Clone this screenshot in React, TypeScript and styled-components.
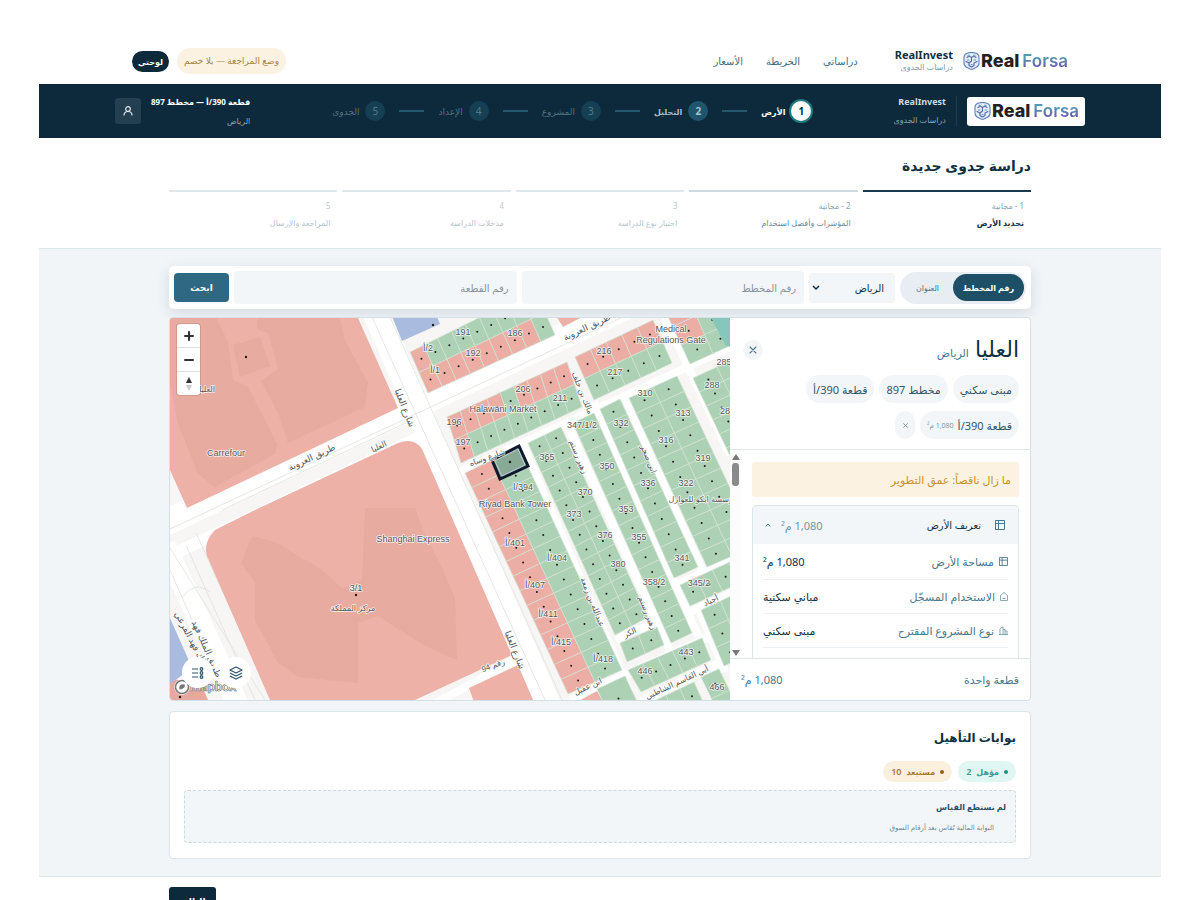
import React from "react";
import styled, { createGlobalStyle, css } from "styled-components";

const ink = "#123043";
const navy = "#0c2a3b";
const steel = "#4a788f";
const line = "#dce5ea";
const mist = "#f3f6f9";

const GlobalStyle = createGlobalStyle`
  * { box-sizing: border-box; }
  body {
    margin: 0;
    background: #fff;
    color: ${ink};
    font-family: "Noto Sans", "DejaVu Sans", sans-serif;
    font-size: 11px;
  }
  button, input, select { font-family: inherit; }
  h1, h2, p, ol, ul, dl, dd { margin: 0; padding: 0; }
  ol, ul { list-style: none; }
`;

const Page = styled.div`
  margin: 38px 39px 0;
`;

/* ---------- brand ---------- */

const LogoBox = styled.span<{ $boxed?: boolean }>`
  display: inline-flex;
  align-items: center;
  direction: ltr;
  gap: 1px;
  ${(p) =>
    p.$boxed &&
    css`
      background: #fff;
      border-radius: 3px;
      padding: 0 6px 0 7px;
      height: 29px;
    `}
`;

const Word = styled.span<{ $tint?: boolean }>`
  font-family: "Inter", sans-serif;
  font-weight: 800;
  font-size: 18px;
  line-height: 22px;
  color: #231f24;
  ${(p) =>
    p.$tint &&
    css`
      margin-left: 2px;
      font-size: 17px;
      font-weight: 600;
      background: linear-gradient(180deg, #4f9cb0 30%, #6a5fae 75%);
      -webkit-background-clip: text;
      background-clip: text;
      color: transparent;
    `}
`;

function Logo({ boxed }: { boxed?: boolean }) {
  return (
    <LogoBox $boxed={boxed}>
      <svg width="17" height="18" viewBox="0 0 17 18" fill="none" strokeWidth="1.1" strokeLinejoin="round" strokeLinecap="round">
        <path d="M4 1.200Q8.500-.200 13 1.200q3 1 3 4v6q0 3-2.500 4l-3.500 1.700q-1.500.700-3 0L3.500 15.200Q1 14 1 11V5.200q0-3 3-4z" stroke="#5d83b8" fill="#e4eaf6" />
        <path d="M4 5.500q2-2 4.500 0 2.500-2 4.500 0M8.500 5.500V9L6 11M3 9.500l3 1.500v2.500l2.500 1.500 2.500-1.500V11l3-1.500" stroke="#5669ad" />
        <path d="M5 3.300h1.500M10.500 3.300H12M11 8h1.500M4.500 8H6M8 12.500h1" stroke="#54a3b4" />
      </svg>
      <Word>Real</Word>
      <Word $tint>Forsa</Word>
    </LogoBox>
  );
}

/* ---------- top header ---------- */

const TopBar = styled.header`
  max-width: 936px;
  height: 46px;
  margin: 0 auto;
  display: flex;
  align-items: center;
  justify-content: space-between;
`;

const Cluster = styled.div<{ $gap: number }>`
  display: flex;
  align-items: center;
  gap: ${(p) => p.$gap}px;
`;

const BrandText = styled.div<{ $dark?: boolean }>`
  display: flex;
  flex-direction: column;
  gap: ${(p) => (p.$dark ? 6 : 0)}px;
  line-height: 12px;
  font-size: 8px;
  color: ${(p) => (p.$dark ? "#8fa5b2" : "#8599a5")};
  ${(p) =>
    p.$dark &&
    css`
      border-right: 1px solid #1d3d4e;
      padding-right: 10px;
    `}
  strong {
    font-size: ${(p) => (p.$dark ? 9 : 11)}px;
    color: ${(p) => (p.$dark ? "#cfdae1" : ink)};
  }
`;

const TopNav = styled.nav`
  display: flex;
  gap: 23px;
  a {
    color: #3f6c82;
    text-decoration: none;
    font-size: 10px;
  }
`;

const Notice = styled.span`
  background: #fbf2e2;
  color: #a88740;
  border-radius: 13px;
  padding: 0 7px;
  line-height: 26px;
  font-size: 9px;
`;

const DashButton = styled.button`
  border: 0;
  border-radius: 11px;
  background: ${navy};
  color: #fff;
  font-weight: 700;
  font-size: 8px;
  height: 21px;
  width: 37px;
  padding: 0;
`;

/* ---------- dark bar ---------- */

const DarkBar = styled.div`
  background: ${navy};
  height: 54px;
`;

const DarkInner = styled.div`
  max-width: 970px;
  height: 100%;
  margin: 0 auto;
  display: flex;
  align-items: center;
  justify-content: space-between;
`;

const Stages = styled.ol`
  display: flex;
  align-items: center;
  gap: 14px;
`;

const Stage = styled.li<{ $state: "on" | "next" | "off" }>`
  display: flex;
  align-items: center;
  gap: 6px;
  font-size: ${(p) => (p.$state === "off" ? 9 : 8)}px;
  font-weight: ${(p) => (p.$state === "off" ? 400 : 700)};
  color: ${(p) => ({ on: "#fff", next: "#a9bcc8", off: "#54717f" })[p.$state]};
  &:not(:last-child)::after {
    content: "";
    width: 25px;
    height: 2px;
    margin-right: 8px;
    background: #24586f;
  }
`;

const StageDot = styled.span<{ $state: "on" | "next" | "off" }>`
  width: 20px;
  height: 20px;
  border-radius: 50%;
  text-align: center;
  line-height: 20px;
  font-size: 10px;
  font-weight: ${(p) => (p.$state === "off" ? 400 : 700)};
  background: ${(p) => ({ on: "#fff", next: "#1f566d", off: "#153f53" })[p.$state]};
  color: ${(p) => ({ on: navy, next: "#a9c3d0", off: "#55798a" })[p.$state]};
  ${(p) => p.$state === "on" && "box-shadow: 0 0 0 2px #1d7c80;"}
`;

const ParcelInfo = styled.div`
  display: flex;
  flex-direction: column;
  gap: 6px;
  line-height: 13px;
  font-size: 8px;
  color: #93a8b4;
  strong { color: #fff; }
`;

const UserButton = styled.button`
  width: 26px;
  height: 26px;
  border: 0;
  border-radius: 3px;
  background: #243f4f;
  display: grid;
  place-items: center;
  padding: 0;
`;

/* ---------- heading and wizard ---------- */

const Container = styled.div`
  max-width: 862px;
  margin: 0 auto;
`;

const Heading = styled.section`
  height: 110px;
  padding-top: 16px;
  h1 {
    font-size: 14px;
    line-height: 24px;
    font-weight: 700;
  }
`;

const Wizard = styled.ol`
  display: grid;
  grid-template-columns: repeat(5, 1fr);
  gap: 5px;
  margin-top: 12px;
`;

const WizardStep = styled.li<{ $bar: string; $small: string; $text: string; $bold?: boolean }>`
  border-top: 2px solid ${(p) => p.$bar};
  padding: 8px 7px 0;
  display: flex;
  flex-direction: column;
  gap: 4px;
  color: ${(p) => p.$text};
  font-size: 8px;
  line-height: 14px;
  font-weight: ${(p) => (p.$bold ? 700 : 400)};
  small {
    font-size: 8px;
    line-height: 12px;
    font-weight: 400;
    color: ${(p) => p.$small};
  }
`;

/* ---------- search ---------- */

const Main = styled.main`
  background: #f1f5f8;
  border-top: 1px solid ${line};
  border-bottom: 1px solid ${line};
  padding: 17px 0;
`;

const SearchBar = styled.form`
  display: flex;
  align-items: center;
  gap: 5px;
  height: 43px;
  padding: 0 5px;
  background: #fff;
  border-radius: 5px;
  box-shadow: 0 4px 14px rgba(30, 60, 80, 0.14);
`;

const Segment = styled.div`
  display: flex;
  align-items: center;
  height: 32px;
  padding: 0 2px;
  border-radius: 16px;
  background: #e7edf3;
`;

const SegmentButton = styled.button<{ $on?: boolean }>`
  height: 27px;
  width: ${(p) => (p.$on ? 71 : 51)}px;
  padding: 0;
  border: 0;
  border-radius: 14px;
  font-size: 8px;
  font-weight: ${(p) => (p.$on ? 700 : 400)};
  background: ${(p) => (p.$on ? "#1d4f66" : "transparent")};
  color: ${(p) => (p.$on ? "#fff" : "#4d7388")};
`;

const SelectWrap = styled.label`
  position: relative;
  width: 86px;
  height: 30px;
  svg {
    position: absolute;
    left: 3px;
    top: 12px;
  }
`;

const CitySelect = styled.select`
  appearance: none;
  width: 100%;
  height: 100%;
  border: 0;
  border-radius: 3px;
  background: ${mist};
  color: ${ink};
  font-size: 10px;
  padding: 0 11px;
`;

const Field = styled.input`
  flex: 1;
  min-width: 0;
  height: 33px;
  border: 0;
  border-radius: 3px;
  background: ${mist};
  padding: 0 8px;
  font-size: 10px;
  &::placeholder { color: #8a949c; opacity: 1; }
`;

const SearchButton = styled.button`
  width: 55px;
  height: 29px;
  border: 0;
  border-radius: 4px;
  background: #2f6882;
  color: #fff;
  font-size: 9px;
  font-weight: 700;
`;

/* ---------- map card ---------- */

const MapCard = styled.section`
  display: flex;
  flex-direction: row-reverse;
  height: 384px;
  margin-top: 8px;
  border: 1px solid #d4e0e6;
  border-radius: 4px;
  overflow: hidden;
  background: #fff;
`;

const MapArea = styled.div`
  position: relative;
  flex: 1;
  min-width: 0;
  direction: ltr;
  > svg { display: block; width: 100%; height: 100%; }
`;

const ZoomStack = styled.div`
  position: absolute;
  left: 7px;
  top: 6px;
  width: 23px;
  border-radius: 3px;
  background: #fff;
  box-shadow: 0 0 0 1px rgba(0, 0, 0, 0.1);
`;

const ZoomButton = styled.button`
  display: grid;
  place-items: center;
  width: 100%;
  height: 23px;
  padding: 0;
  border: 0;
  background: transparent;
  & + & { border-top: 1px solid #ddd; height: 24px; }
`;

const RoundTools = styled.div`
  position: absolute;
  left: 12px;
  bottom: 12px;
  display: flex;
  gap: 7px;
`;

const RoundButton = styled.button`
  width: 31px;
  height: 31px;
  padding: 0;
  border: 0;
  border-radius: 50%;
  background: #fff;
  display: grid;
  place-items: center;
`;

type Pt = [number, number];
const fills: Record<string, string> = { p: "#ecaea4", g: "#add1b4", b: "#a9bbdf", t: "#7fc4b6" };

/* Each string is one row of parcels; each letter is one parcel's land-use colour. */
const blocks: { q: [Pt, Pt, Pt, Pt]; rows: string[] }[] = [
  { q: [[410, 352], [535, 290], [555, 335], [428, 393]], rows: ["pgggggggg", "ppppppppg"] },
  { q: [[447, 417], [567, 362], [582, 407], [461, 463]], rows: ["ppppgpppp", "pgggggggg"] },
  { q: [[575, 357], [653, 320], [672, 363], [594, 400]], rows: ["ppppp", "ggggg"] },
  { q: [[664, 308], [712, 286], [736, 343], [690, 364]], rows: ["pp", "pg", "gg"] },
  { q: [[693, 378], [741, 356], [781, 440], [733, 462]], rows: ["gg", "gg", "gg", "gg", "gg", "gg"] },
  { q: [[629, 398], [677, 376], [757, 545], [707, 567]], rows: Array(11).fill("gg") },
  { q: [[600, 409], [620, 399], [698, 567], [674, 578]], rows: Array(11).fill("g") },
  { q: [[573, 423], [594, 413], [692, 633], [671, 643]], rows: Array(15).fill("g") },
  { q: [[528, 443], [561, 427], [648, 617], [615, 635]], rows: Array(13).fill("gg") },
  { q: [[620, 643], [657, 627], [664, 645], [627, 662]], rows: ["gg"] },
  { q: [[465, 473], [519, 447], [622, 670], [568, 694]], rows: Array(15).fill("pg") },
  { q: [[628, 670], [702, 638], [711, 660], [641, 692]], rows: ["ggggg"] },
  { q: [[597, 689], [625, 676], [640, 708], [612, 721]], rows: ["g"] },
  { q: [[652, 702], [694, 682], [704, 704], [662, 724]], rows: ["ggg"] },
  { q: [[701, 677], [719, 669], [740, 712], [722, 720]], rows: ["g", "g"] },
  { q: [[680, 585], [745, 555], [755, 576], [690, 606]], rows: ["gggg"] },
  { q: [[701, 610], [740, 592], [764, 648], [724, 666]], rows: ["gg", "gg", "gg"] },
];

const lerp = (a: Pt, b: Pt, t: number): Pt => [a[0] + (b[0] - a[0]) * t, a[1] + (b[1] - a[1]) * t];
const at = (q: Pt[], u: number, v: number) => lerp(lerp(q[0], q[1], u), lerp(q[3], q[2], u), v);

function Parcels() {
  return (
    <>
      {blocks.map((block, b) => (
        <g key={b}>
          {block.rows.flatMap((row, r) =>
            row.split("").map((kind, c) => {
              const nR = block.rows.length;
              const nC = row.length;
              const corners = [
                at(block.q, c / nC, r / nR),
                at(block.q, (c + 1) / nC, r / nR),
                at(block.q, (c + 1) / nC, (r + 1) / nR),
                at(block.q, c / nC, (r + 1) / nR),
              ];
              const mid = at(block.q, (c + 0.5) / nC, (r + 0.5) / nR);
              return (
                <g key={`${r}-${c}`}>
                  <polygon points={corners.join(" ")} fill={fills[kind]} stroke="#d3e3d4" strokeWidth="0.7" />
                  <circle cx={mid[0]} cy={mid[1]} r="1" fill="#1c1c1c" />
                </g>
              );
            })
          )}
        </g>
      ))}
    </>
  );
}

const parcelLabels: [string, number, number][] = [
  ["191", 463, 335], ["186", 515, 336], ["192", 473, 356], ["2/أ", 428, 351], ["1/أ", 435, 373],
  ["216", 604, 354], ["217", 615, 375], ["206", 523, 392], ["211", 560, 401], ["196", 454, 425],
  ["197", 463, 445], ["310", 645, 396], ["313", 683, 416], ["316", 666, 443], ["319", 703, 461],
  ["322", 686, 486], ["332", 621, 426], ["347/1/2", 582, 428], ["365", 547, 460], ["350", 607, 469],
  ["336", 648, 486], ["370", 585, 495], ["394/ا", 523, 490], ["353", 626, 512], ["373", 574, 517],
  ["376", 605, 538], ["355", 639, 540], ["341", 682, 561], ["380", 618, 567], ["401/أ", 515, 546],
  ["404/أ", 557, 561], ["407/أ", 535, 588], ["411/أ", 548, 617], ["415/أ", 561, 645], ["418/أ", 603, 662],
  ["358/2", 654, 585], ["345/2", 699, 586], ["443", 686, 655], ["446", 645, 674], ["466", 717, 690],
  ["288", 712, 388], ["285", 724, 365], ["28", 725, 414], ["3/1", 356, 591],
];

const placeLabels: [string, number, number][] = [
  ["Carrefour", 226, 456], ["Shanghai Express", 413, 542], ["Riyad Bank Tower", 515, 507],
  ["Halawani Market", 503, 412], ["Medical", 671, 332], ["Regulations Gate", 671, 343],
];

const streetLabels: [string, number, number, number, number][] = [
  ["مركز المملكة", 353, 611, 0, 8], ["العليا", 207, 392, 0, 8],
  ["طريق العروبة", 313, 460, -25, 9], ["طريق العروبة", 588, 330, -25, 9], ["العليا", 380, 449, -25, 8],
  ["شارع العليا", 402, 409, 68, 9], ["شارع العليا", 512, 651, 68, 9], ["رقم 94", 494, 668, -20, 8],
  ["مالك بن خلف", 580, 394, 68, 8], ["زهير رستم", 576, 458, 68, 8], ["زهير رستم", 645, 614, 68, 8],
  ["ابي صخر", 646, 460, 68, 8], ["عبدالله بن زمعة", 590, 603, 68, 8], ["ابن عقيل", 589, 689, -25, 8],
  ["أبي القاسم الشاطبي", 678, 685, -25, 8], ["الكر", 631, 635, -25, 8], ["أجياد", 712, 603, -25, 8],
  ["مؤسسة ابكو للعوازل", 703, 502, 0, 8], ["شارع وساه", 488, 460, -20, 8],
  ["طريق الملك فهد", 204, 650, 66, 9], ["الملك فهد الفرعي", 190, 643, 62, 9],
];

const MapText = styled.text`
  font-family: "Liberation Sans", "DejaVu Sans", sans-serif;
  text-anchor: middle;
  direction: rtl;
  fill: #54565a;
  stroke: rgba(255, 255, 255, 0.8);
  stroke-width: 1.6px;
  stroke-linejoin: round;
  paint-order: stroke;
`;

function ParcelMap() {
  return (
    <svg viewBox="170 318 560 382" preserveAspectRatio="xMidYMid slice" role="img" aria-label="خريطة القطع">
      <rect x="100" y="250" width="700" height="520" fill="#f7f6f4" />
      {/* main avenues */}
      <g stroke="#fff" fill="none">
        <path d="M150 530 640 300" strokeWidth="26" />
        <path d="M150 565 420 437" strokeWidth="12" />
        <path d="M370 300 550 710" strokeWidth="26" />
        <path d="M165 545 240 710" strokeWidth="22" />
        <path d="M460 472 735 345" strokeWidth="8" />
        <path d="M522 444 630 692M594 402 625 470M567 424 670 650M596 408 700 640M624 396 704 575M665 318 730 455" strokeWidth="8" />
        <path d="M570 700 735 625M672 587 740 556M690 612 740 590M616 640 660 620M640 702 735 655M400 722 520 658" strokeWidth="8" />
        <path d="M698 606 725 672" strokeWidth="8" />
      </g>
      <g stroke="#dfe2dd" fill="none" strokeWidth="0.8">
        <path d="M170 529 640 309M222 510 410 421M390 317 562 700M372 317 545 700" />
        <path d="M170 548 265 700M186 545 255 700M196 533 272 700M170 570 192 620M182 598q12-18 28-6" />
      </g>
      {/* large commercial plots */}
      <path d="M170 300H350L398 408 187 508 170 470z" fill="#eeb1a7" />
      <g fill="#e7ab9f">
        <path d="M170 317h46l12 25 5 38 15 7 29 57-2 10-60 33-17-13-20-50-8-40z" />
        <path d="M257 317h83l5 23 23 43-3 24-77 36-10-30-17-32 17-12-10-36-11-4z" />
        <path d="M233 345l27-8 10 29-30 11z" />
      </g>
      <path d="M255 510 398 443q16-6 24 6L512 655 415 700H270L207 556q-4-14 8-26z" fill="#eeb1a7" />
      <path d="M252 536l23 6 46 27 21 19 20-8 3-72h50l8 22 20 40 12 28 2 62-32-14-47-30-20 7v60l-60-6-20-14-23-43v-37l-14-20z" fill="#e7ab9f" />
      <path d="M469 688 518 665 534 702H474z" fill="#eeb1a7" />
      <path d="M170 678l32 8 6 14h-38z" fill="#e7a99f" />
      <path d="M170 618l16 36 6 14-22 16z" fill="#a9bbdf" />
      <path d="M391 314l11 27 38-17-4-10z" fill="#a9bbdf" />
      <path d="M555 314l8 13 25-13zM577 702l20-11 6 11z" fill="#eeb1a7" />
      <Parcels />
      <path d="M709 314h24v33l-7-1z" fill="#86c6bd" />
      <path d="M492 460 519 446 528 466 500 479z" fill="#88aa94" stroke="#10182b" strokeWidth="3" />
      <path d="M495 461 518 449 525 465 502 476z" fill="none" stroke="#c3d5ee" strokeWidth="0.8" />
      <g fill="#1c1c1c">
        <circle cx="246" cy="357" r="1.200" />
        <circle cx="356" cy="595" r="1.200" />
        <circle cx="510" cy="462" r="1.200" />
        <circle cx="433" cy="325" r="1.200" />
        <circle cx="180" cy="697" r="1.200" />
      </g>
      {placeLabels.map(([t, x, y]) => (
        <MapText key={t} x={x} y={y} fontSize="9">{t}</MapText>
      ))}
      {streetLabels.map(([t, x, y, a, s], i) => (
        <MapText key={i} x={x} y={y} fontSize={s} transform={`rotate(${a} ${x} ${y})`}>{t}</MapText>
      ))}
      {parcelLabels.map(([t, x, y]) => (
        <MapText key={t} x={x} y={y} fontSize="9">{t}</MapText>
      ))}
      <circle cx="182" cy="687" r="6" fill="none" stroke="#fff" strokeWidth="3.500" />
      <circle cx="182" cy="687" r="6.500" fill="#fff" stroke="#777" strokeWidth="1.500" />
      <path d="M179.500 689.500q-1-4 2-5t3.500 1q0 3-5.500 4z" fill="#777" />
      <text x="190" y="691" fontSize="13" fontWeight="700" fontFamily="Lato, sans-serif" fill="#fff" stroke="#777" strokeWidth="0.700">mapbox</text>
    </svg>
  );
}

/* ---------- side panel ---------- */

const Panel = styled.aside`
  width: 300px;
  display: flex;
  flex-direction: column;
`;

const PanelHead = styled.div`
  height: 132px;
  padding: 16px 11px 0 13px;
  border-bottom: 1px solid ${line};
`;

const TitleRow = styled.div`
  display: flex;
  align-items: center;
  justify-content: space-between;
  height: 32px;
  h2 {
    display: flex;
    align-items: baseline;
    gap: 6px;
    font-size: 22px;
    line-height: 30px;
    font-weight: 400;
  }
  small {
    font-size: 11px;
    color: ${steel};
  }
`;

const CloseButton = styled.button<{ $small?: boolean }>`
  width: 20px;
  height: ${(p) => (p.$small ? 28 : 20)}px;
  border: 0;
  border-radius: 10px;
  background: ${mist};
  display: grid;
  place-items: center;
  padding: 0;
`;

const Chips = styled.div`
  display: flex;
  gap: 5px;
  margin-top: 9px;
  & + & { margin-top: 8px; }
`;

const Chip = styled.span`
  display: inline-flex;
  align-items: center;
  gap: 4px;
  height: 28px;
  padding: 0 7px;
  border-radius: 14px;
  background: ${mist};
  color: #33576b;
  font-size: 11px;
  small { font-size: 7px; color: #8196a3; }
`;

const PanelBody = styled.div`
  flex: 1;
  min-height: 0;
  display: flex;
  overflow: hidden;
`;

const Scroller = styled.div`
  flex: 1;
  min-width: 0;
  overflow: hidden;
  padding: 12px 11px 0;
`;

const ScrollTrack = styled.div`
  width: 11px;
  display: flex;
  flex-direction: column;
  align-items: center;
  padding: 4px 0 2px;
  background: #fcfcfc;
  span {
    width: 7px;
    height: 23px;
    margin: 3px 0 auto;
    border-radius: 3px;
    background: #8b8b8b;
  }
`;

const Alert = styled.p`
  height: 35px;
  padding: 0 8px;
  line-height: 35px;
  border-radius: 3px;
  background: #fbf2e2;
  color: #c8922f;
  font-size: 11px;
`;

const Details = styled.div`
  margin-top: 8px;
  height: 240px;
  border: 1px solid ${line};
  border-radius: 4px;
  overflow: hidden;
`;

const DetailsHead = styled.button`
  display: flex;
  align-items: center;
  width: 100%;
  height: 38px;
  padding: 0 13px 0 12px;
  border: 0;
  background: #f2f6f8;
  color: ${ink};
  font-size: 10px;
  gap: 14px;
  span {
    margin-right: auto;
    display: flex;
    align-items: center;
    gap: 10px;
    color: #7397aa;
    font-size: 11px;
  }
`;

const DetailRow = styled.div`
  display: flex;
  align-items: center;
  justify-content: space-between;
  height: 34px;
  margin: 0 10px;
  border-bottom: 1px solid #eef2f4;
  font-size: 11px;
  &:first-child { height: 36px; }
  dt { display: flex; align-items: center; gap: 5px; color: ${steel}; }
`;

const PanelFoot = styled.div`
  height: 42px;
  padding: 0 11px;
  border-top: 1px solid ${line};
  display: flex;
  align-items: center;
  justify-content: space-between;
  color: ${steel};
  font-size: 11px;
`;

/* ---------- gates ---------- */

const GatesCard = styled.section`
  margin-top: 10px;
  padding: 13px 14px 14px;
  height: 148px;
  background: #fff;
  border: 1px solid ${line};
  border-radius: 4px;
  h2 { font-size: 12px; line-height: 26px; font-weight: 700; }
`;

const Tag = styled.span<{ $bg: string; $fg: string; $dot: string }>`
  display: inline-flex;
  align-items: center;
  gap: 5px;
  height: 21px;
  padding: 0 8px;
  border-radius: 11px;
  background: ${(p) => p.$bg};
  color: ${(p) => p.$fg};
  font-size: 8px;
  font-weight: 600;
  span { font-size: 9px; }
  &::before {
    content: "";
    width: 4px;
    height: 4px;
    border-radius: 50%;
    background: ${(p) => p.$dot};
  }
`;

const Tags = styled.div`
  display: flex;
  gap: 6px;
  margin-top: 10px;
`;

const Unmeasured = styled.div`
  margin-top: 8px;
  height: 53px;
  padding: 8px 9px;
  border: 1px dashed #ccd9e0;
  border-radius: 4px;
  background: ${mist};
  display: flex;
  flex-direction: column;
  gap: 6px;
  font-size: 8px;
  line-height: 15px;
  strong { color: #2d5166; }
  ul { padding-right: 12px; font-size: 7px; color: #6e8796; }
`;

const Footer = styled.footer`
  padding: 10px 0 12px;
`;

const NextButton = styled.button`
  display: block;
  margin-right: auto;
  width: 47px;
  height: 29px;
  border: 0;
  border-radius: 3px;
  background: ${navy};
  color: #fff;
  font-size: 9px;
  font-weight: 700;
`;

/* ---------- icons ---------- */

const Cross = ({ size }: { size: number }) => (
  <svg width={size} height={size} viewBox="0 0 8 8" stroke={steel} strokeWidth="1.100" strokeLinecap="round">
    <path d="M1 1l6 6M7 1 1 7" />
  </svg>
);

const GridIcon = ({ size }: { size: number }) => (
  <svg width={size} height={size} viewBox="0 0 10 10" fill="none" stroke={steel} strokeWidth="1">
    <path d="M.500.500h9v9h-9zM.500 3.500h9M3.500.500v9" />
  </svg>
);

const HomeIcon = () => (
  <svg width="8" height="9" viewBox="0 0 8 9" fill="none" stroke="#7d9dae" strokeWidth="0.900">
    <path d="M.500 8.500V3.500L4 .500l3.500 3v5zM2.500 6.500h3" />
  </svg>
);

const TowersIcon = () => (
  <svg width="9" height="9" viewBox="0 0 9 9" fill="none" stroke="#7d9dae" strokeWidth="0.900">
    <path d="M0 8.500h9M1 8.500V2.500L4 .800v7.700M4 3.500h2v5M6 5h2v3.500" />
  </svg>
);

const stages = ["الأرض", "التحليل", "المشروع", "الإعداد", "الجدوى"];
const stageState = (i: number) => (i === 0 ? "on" : i === 1 ? "next" : "off") as "on" | "next" | "off";

const wizard = [
  { n: "1 - مجانية", t: "تحديد الأرض", bar: "#173a4e", small: "#8aa3b0", text: ink, bold: true },
  { n: "2 - مجانية", t: "المؤشرات وأفضل استخدام", bar: "#cddae1", small: "#8aa3b0", text: "#6b8b9c" },
  { n: "3", t: "اختيار نوع الدراسة", bar: "#dfe8ec", small: "#bccad2", text: "#b4c5ce" },
  { n: "4", t: "مدخلات الدراسة", bar: "#dfe8ec", small: "#bccad2", text: "#b4c5ce" },
  { n: "5", t: "المراجعة والإرسال", bar: "#dfe8ec", small: "#bccad2", text: "#b4c5ce" },
];

export default function App() {
  return (
    <Page dir="rtl" lang="ar">
      <GlobalStyle />
      <TopBar>
        <Cluster $gap={37}>
          <Cluster $gap={10}>
            <Logo />
            <BrandText>
              <strong>RealInvest</strong>
              <span>دراسات الجدوى</span>
            </BrandText>
          </Cluster>
          <TopNav>
            <a href="#studies">دراساتي</a>
            <a href="#map">الخريطة</a>
            <a href="#pricing">الأسعار</a>
          </TopNav>
        </Cluster>
        <Cluster $gap={8}>
          <Notice>وضع المراجعة — بلا خصم</Notice>
          <DashButton type="button">لوحتي</DashButton>
        </Cluster>
      </TopBar>

      <DarkBar>
        <DarkInner>
          <Cluster $gap={10}>
            <Logo boxed />
            <BrandText $dark>
              <strong>RealInvest</strong>
              <span>دراسات الجدوى</span>
            </BrandText>
          </Cluster>
          <Stages>
            {stages.map((s, i) => (
              <Stage key={s} $state={stageState(i)}>
                <StageDot $state={stageState(i)}>{i + 1}</StageDot>
                {s}
              </Stage>
            ))}
          </Stages>
          <Cluster $gap={10}>
            <ParcelInfo>
              <strong>قطعة 390/أ — مخطط 897</strong>
              <span>الرياض</span>
            </ParcelInfo>
            <UserButton type="button" aria-label="الحساب">
              <svg width="10" height="10" viewBox="0 0 10 10" fill="none" stroke="#dbe5ea" strokeWidth="1.200">
                <circle cx="5" cy="3" r="2.300" />
                <path d="M1 9.500q0-4 4-4t4 4" />
              </svg>
            </UserButton>
          </Cluster>
        </DarkInner>
      </DarkBar>

      <Heading>
        <Container>
          <h1>دراسة جدوى جديدة</h1>
          <Wizard>
            {wizard.map((w) => (
              <WizardStep key={w.t} $bar={w.bar} $small={w.small} $text={w.text} $bold={w.bold}>
                <small>{w.n}</small>
                <span>{w.t}</span>
              </WizardStep>
            ))}
          </Wizard>
        </Container>
      </Heading>

      <Main>
        <Container>
          <SearchBar onSubmit={(e) => e.preventDefault()}>
            <Segment>
              <SegmentButton type="button" $on>رقم المخطط</SegmentButton>
              <SegmentButton type="button">العنوان</SegmentButton>
            </Segment>
            <SelectWrap>
              <CitySelect aria-label="المدينة">
                <option>الرياض</option>
              </CitySelect>
              <svg width="8" height="6" viewBox="0 0 8 6" fill="none" stroke={ink} strokeWidth="1.500">
                <path d="M1 1l3 3 3-3" />
              </svg>
            </SelectWrap>
            <Field aria-label="رقم المخطط" placeholder="رقم المخطط" />
            <Field aria-label="رقم القطعة" placeholder="رقم القطعة" />
            <SearchButton type="submit">ابحث</SearchButton>
          </SearchBar>

          <MapCard>
            <MapArea>
              <ParcelMap />
              <ZoomStack>
                <ZoomButton type="button" aria-label="تكبير">
                  <svg width="10" height="10" viewBox="0 0 10 10" stroke="#333" strokeWidth="2" strokeLinecap="round"><path d="M5 1v8M1 5h8" /></svg>
                </ZoomButton>
                <ZoomButton type="button" aria-label="تصغير">
                  <svg width="10" height="10" viewBox="0 0 10 10" stroke="#333" strokeWidth="2" strokeLinecap="round"><path d="M1 5h8" /></svg>
                </ZoomButton>
                <ZoomButton type="button" aria-label="الشمال">
                  <svg width="8" height="14" viewBox="0 0 8 14"><path d="M4 0l3 6H1z" fill="#333" /><path d="M4 14l3-6H1z" fill="#ccc" /></svg>
                </ZoomButton>
              </ZoomStack>
              <RoundTools>
                <RoundButton type="button" aria-label="مفتاح الخريطة">
                  <svg width="12" height="12" viewBox="0 0 12 12" fill="none" stroke="#2d556b" strokeWidth="1.200">
                    <path d="M0 2h6M0 6h6M0 10h6" />
                    <circle cx="9.500" cy="2" r="1.300" /><circle cx="9.500" cy="6" r="1.300" /><circle cx="9.500" cy="10" r="1.300" />
                  </svg>
                </RoundButton>
                <RoundButton type="button" aria-label="الطبقات">
                  <svg width="14" height="14" viewBox="0 0 14 14" fill="none" stroke="#2d556b" strokeWidth="1.200" strokeLinejoin="round">
                    <path d="M7 1l6 3-6 3-6-3zM1 7l6 3 6-3M1 10l6 3 6-3" />
                  </svg>
                </RoundButton>
              </RoundTools>
            </MapArea>

            <Panel>
              <PanelHead>
                <TitleRow>
                  <h2>العليا <small>الرياض</small></h2>
                  <CloseButton type="button" aria-label="إغلاق"><Cross size={8} /></CloseButton>
                </TitleRow>
                <Chips>
                  <Chip>مبنى سكني</Chip>
                  <Chip>مخطط 897</Chip>
                  <Chip>قطعة 390/أ</Chip>
                </Chips>
                <Chips>
                  <Chip>قطعة 390/أ <small>1,080 م²</small></Chip>
                  <CloseButton type="button" $small aria-label="إزالة"><Cross size={5} /></CloseButton>
                </Chips>
              </PanelHead>
              <PanelBody>
                <Scroller>
                  <Alert>ما زال ناقصاً: عمق التطوير</Alert>
                  <Details>
                    <DetailsHead type="button">
                      <GridIcon size={10} />
                      تعريف الأرض
                      <span>
                        1,080 م²
                        <svg width="6" height="4" viewBox="0 0 6 4" fill="none" stroke={steel}><path d="M.500 3.500 3 1l2.500 2.500" /></svg>
                      </span>
                    </DetailsHead>
                    <dl>
                      <DetailRow>
                        <dt><GridIcon size={9} />مساحة الأرض</dt>
                        <dd>1,080 م²</dd>
                      </DetailRow>
                      <DetailRow>
                        <dt><HomeIcon />الاستخدام المسجّل</dt>
                        <dd>مباني سكنية</dd>
                      </DetailRow>
                      <DetailRow>
                        <dt><TowersIcon />نوع المشروع المقترح</dt>
                        <dd>مبنى سكني</dd>
                      </DetailRow>
                    </dl>
                  </Details>
                </Scroller>
                <ScrollTrack>
                  <svg width="8" height="6" viewBox="0 0 8 6"><path d="M4 0l4 6H0z" fill="#777" /></svg>
                  <span />
                  <svg width="8" height="6" viewBox="0 0 8 6"><path d="M4 6l4-6H0z" fill="#777" /></svg>
                </ScrollTrack>
              </PanelBody>
              <PanelFoot>
                <span>قطعة واحدة</span>
                <span>1,080 م²</span>
              </PanelFoot>
            </Panel>
          </MapCard>

          <GatesCard>
            <h2>بوابات التأهيل</h2>
            <Tags>
              <Tag $bg="#e0f6f2" $fg="#3a9d90" $dot="#1f9183">مؤهل <span>2</span></Tag>
              <Tag $bg="#fbf0de" $fg="#a57a2c" $dot="#8f6418">مستبعد <span>10</span></Tag>
            </Tags>
            <Unmeasured>
              <strong>لم نستطع القياس</strong>
              <ul>
                <li>البوابة المالية تُقاس بعد أرقام السوق</li>
              </ul>
            </Unmeasured>
          </GatesCard>
        </Container>
      </Main>

      <Footer>
        <Container>
          <NextButton type="button">التالي</NextButton>
        </Container>
      </Footer>
    </Page>
  );
}
